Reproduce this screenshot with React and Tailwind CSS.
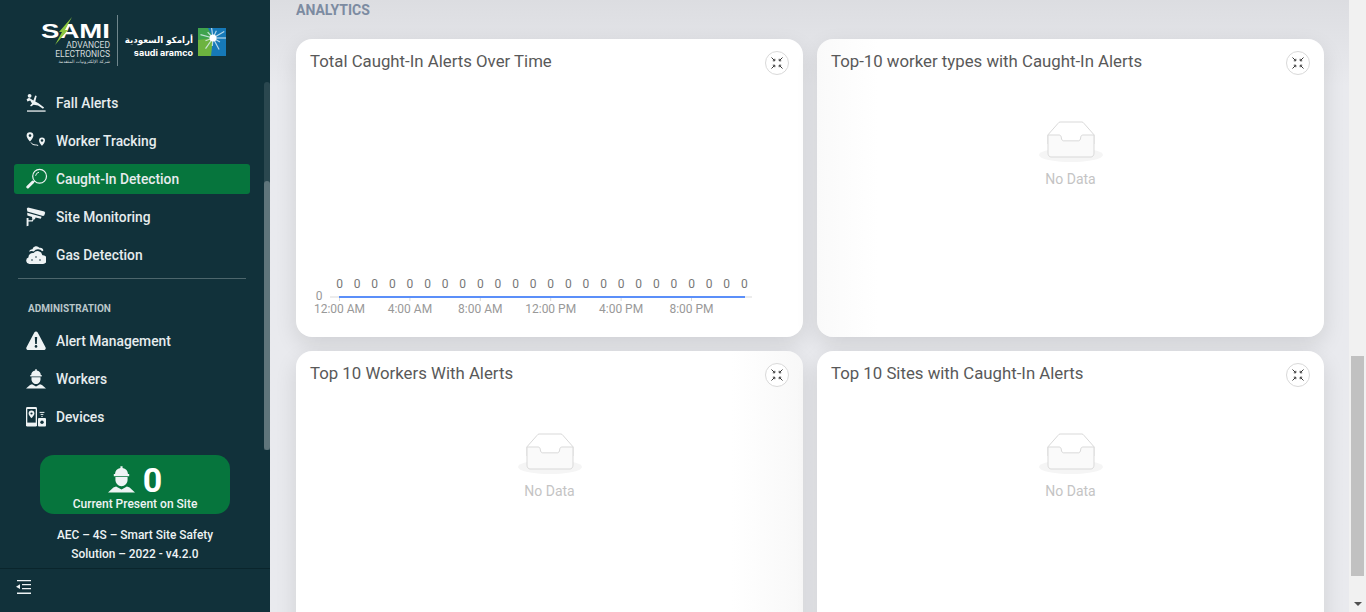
function FallIcon() {
  return (
    <svg width="20" height="20" viewBox="0 0 20 20" fill="#eef3f4">
      <circle cx="3.600" cy="2.800" r="1.900" />
      <path d="M.6 6.200 3 4.800l4.400 2.600 1.800-5 1.500.6-1.400 5.400 3.200 1.800 5.600 4.400-1.100 1.200-5-3.400-4.400-.6-2.600 1.800-.9-1L6 10.400 4.200 7.600 1.400 8.600z" />
      <path d="M1 17.400h18.600v1.300H1z" />
    </svg>
  );
}

function RouteIcon() {
  return (
    <svg width="20" height="20" viewBox="0 0 20 20" fill="none">
      <path d="M4 1.200a3.400 3.400 0 0 0-3.400 3.400C.6 7 4 10.600 4 10.600s3.400-3.600 3.400-6A3.400 3.400 0 0 0 4 1.200z" fill="#eef3f4" />
      <circle cx="4" cy="4.600" r="1.300" fill="#11313a" />
      <path d="M16 6.500a3 3 0 0 0-3 3c0 2.200 3 5.300 3 5.300s3-3.100 3-5.300a3 3 0 0 0-3-3z" fill="#eef3f4" />
      <circle cx="16" cy="9.500" r="1.200" fill="#11313a" />
      <path d="M5 11.500c1 1.800 2.600 2.400 4.200 2.400 1.200 0 2 .2 3 .6" stroke="#eef3f4" strokeWidth="1" />
    </svg>
  );
}

function SearchIcon() {
  return (
    <svg width="22" height="22" viewBox="0 0 22 22" fill="none" stroke="#eef3f4">
      <circle cx="13.600" cy="8.200" r="6.900" strokeWidth="1.200" />
      <path d="M8.600 13 7.400 14.200" strokeWidth="1.200" />
      <path d="M6.600 14.200 1.800 19" strokeWidth="3" strokeLinecap="round" />
      <path d="M9.600 7.800a4.200 4.200 0 0 1 3.400-3.600" strokeWidth="1" />
    </svg>
  );
}

function CameraIcon() {
  return (
    <svg width="20" height="20" viewBox="0 0 20 20" fill="#eef3f4">
      <path d="M2 0.400 18.400 4.600l.8 1.200-1 2.800-1.200.4L1.400 4.600.8 1.400z" />
      <path d="M1.200 5.800 15.600 9.800l-.8 2-5.200-1.200-.8 1.800-3-.8.400-1.600-4.800-1.400z" />
      <path d="M.6 11h1.900v2.200h3.400l1-2 1.200.5-1.400 2.900H2.500v4.200L.6 19.200z" />
    </svg>
  );
}

function CloudIcon() {
  return (
    <svg width="20" height="20" viewBox="0 0 20 20" fill="#eef3f4">
      <path d="M3 6.800a3.200 3.200 0 0 1 3.400-2.600A4 4 0 0 1 13.400 2.800a3.200 3.200 0 0 1 4 2.800l-1.200.6A5.200 5.200 0 0 0 7.800 6.400 5.400 5.400 0 0 0 3 6.800z" />
      <path d="M3.400 19a3.300 3.300 0 0 1-1-6.400A4.600 4.600 0 0 1 7.600 8a5 5 0 0 1 8.800 2.200 4.400 4.400 0 0 1 .6 8.800z" />
      <circle cx="6" cy="15" r=".8" fill="#11313a" />
      <circle cx="10" cy="12" r=".8" fill="#11313a" />
      <circle cx="14" cy="15" r=".8" fill="#11313a" />
    </svg>
  );
}

function AlertIcon() {
  return (
    <svg width="20" height="20" viewBox="0 0 20 20">
      <path d="M10 .6c.7 0 1.300.4 1.700 1l7.800 14.600c.7 1.300-.2 2.800-1.700 2.800H2.200C.7 19-.2 17.500.5 16.200L8.300 1.600c.4-.6 1-1 1.700-1z" fill="#eef3f4" />
      <path d="M8.800 6h2.400l-.4 7H9.200z" fill="#11313a" />
      <circle cx="10" cy="15.400" r="1.300" fill="#11313a" />
    </svg>
  );
}

function WorkerIcon({ size = 20 }) {
  return (
    <svg width={size} height={size} viewBox="0 0 20 20" fill="#eef3f4">
      <path d="M9.200.2h1.600v1.200c2.500.4 3.900 2.100 4 4.500h.9v1.600H4.300V5.900h.9c.1-2.400 1.500-4.100 4-4.500z" />
      <path d="M5.500 8.200h9v2c0 2.600-2 4.800-4.500 4.800s-4.500-2.200-4.500-4.800z" />
      <path d="M6 15.200 10 17.400l4-2.200 2 .8 4 3.600H0l4-3.600z" />
    </svg>
  );
}

function DevicesIcon() {
  return (
    <svg width="20" height="20" viewBox="0 0 20 20">
      <rect x="0" y="0" width="11" height="19.600" rx="1.400" fill="#eef3f4" />
      <rect x="1.300" y="2" width="8.400" height="13.600" fill="#11313a" />
      <path d="M5.500 3.600a2.900 2.900 0 0 1 2.900 2.900c0 2-2.900 4.700-2.900 4.700S2.600 8.500 2.600 6.500a2.900 2.900 0 0 1 2.900-2.900z" fill="#eef3f4" />
      <circle cx="5.500" cy="6.500" r="1.100" fill="#11313a" />
      <rect x="12" y="11" width="8" height="8.600" rx="1" fill="#eef3f4" />
      <circle cx="16" cy="15.300" r="1.700" fill="#11313a" />
      <path d="M13.600 5.400h4.800M14.600 7.400h2.800" stroke="#eef3f4" strokeWidth="1" />
      <circle cx="16" cy="9.400" r=".7" fill="#eef3f4" />
    </svg>
  );
}

function AramcoMark() {
  const rays = [0, 30, 62, 95, 125, 160, 195, 228, 262, 295, 330];
  return (
    <svg width="28" height="28" viewBox="0 0 28 28">
      <rect width="28" height="28" fill="#3fa34d" />
      <path d="M28 0v28H11L15 10 10 0z" fill="#1679b8" />
      <path d="M0 28h13L15 10 0 12z" fill="#6db33f" />
      {rays.map((r, i) => (
        <line key={r} x1="15" y1="10" x2={15 + (i % 2 ? 8 : 13) * Math.cos((r * Math.PI) / 180)} y2={10 + (i % 2 ? 8 : 13) * Math.sin((r * Math.PI) / 180)} stroke="#dff1f7" strokeWidth="1.200" opacity="0.8" />
      ))}
      <circle cx="15" cy="10" r="3.500" fill="#ffffff" />
    </svg>
  );
}

function Logo() {
  return (
    <div className="h-[84px] flex items-start pl-[41px] pt-[15px]">
      <div className="relative w-[69px] h-[50px] text-right text-white">
        <div className="h-[26px] pt-[7px] font-['Liberation_Sans',sans-serif] font-bold text-[20px] leading-[19px] scale-x-[1.38] origin-right">SAMI</div>
        <div className="text-[8.500px] leading-[9px] text-[#d3dcde]">ADVANCED</div>
        <div className="text-[8.500px] leading-[9px] text-[#d3dcde]">ELECTRONICS</div>
        <div className="text-[4.500px] leading-[6px] text-[#d3dcde] font-['DejaVu_Sans',sans-serif]" dir="rtl">شركة الإلكترونيات المتقدمة</div>
        <svg className="absolute left-[13px] top-[2px]" width="20" height="29" viewBox="0 0 20 29">
          <path d="M18 0 11 13h3L1 28 8 15H5z" fill="#8dc63f" />
        </svg>
      </div>
      <div className="w-px h-[51px] bg-[#6f868c] mx-[7px]" />
      <div className="mt-[19px] w-[68px] text-white text-right mr-[5px] shrink-0">
        <div className="text-[8.700px] leading-[12px] font-['DejaVu_Sans',sans-serif] font-bold whitespace-nowrap" dir="rtl">أرامكو السعودية</div>
        <div className="text-[9px] leading-[10px] mt-[2px] font-bold font-['Inter',sans-serif] whitespace-nowrap">saudi aramco</div>
      </div>
      <div className="mt-[13px] shrink-0">
        <AramcoMark />
      </div>
    </div>
  );
}

function NavItem({ icon, label, active }) {
  return (
    <div className="h-[38px] flex items-center">
      <div className={`w-[236px] h-[30px] ml-[14px] rounded-[3px] flex items-center pl-[12px] ${active ? 'bg-[#06753d]' : ''}`}>
        <span className="w-[30px] flex justify-start items-center">{icon}</span>
        <span className="text-[13.800px] font-medium text-[#e6ecee]">{label}</span>
      </div>
    </div>
  );
}

function Sidebar() {
  return (
    <aside className="relative w-[270px] h-full shrink-0 bg-[#11313a] flex flex-col">
      <Logo />
      <NavItem icon={<FallIcon />} label="Fall Alerts" />
      <NavItem icon={<RouteIcon />} label="Worker Tracking" />
      <NavItem icon={<SearchIcon />} label="Caught-In Detection" active />
      <NavItem icon={<CameraIcon />} label="Site Monitoring" />
      <NavItem icon={<CloudIcon />} label="Gas Detection" />
      <div className="h-px bg-[#4d666c] ml-[18px] w-[228px] mt-[4px]" />
      <div className="h-[43px] pl-[28px] pt-[24px] text-[10px] leading-[11px] font-bold text-[#b9c6c9]">ADMINISTRATION</div>
      <NavItem icon={<AlertIcon />} label="Alert Management" />
      <NavItem icon={<WorkerIcon />} label="Workers" />
      <NavItem icon={<DevicesIcon />} label="Devices" />
      <div className="mt-[19px] ml-[40px] w-[190px] h-[59px] rounded-[14px] bg-[#06753d] flex flex-col items-center text-white">
        <div className="flex items-center h-[39px] pt-[10px] gap-[8px]">
          <WorkerIcon size={27} />
          <span className="text-[34px] font-bold leading-none">0</span>
        </div>
        <div className="text-[12px] font-medium leading-[14px] mt-[3px] text-[#eef3f4]">Current Present on Site</div>
      </div>
      <div className="mt-[12px] text-center text-[11.900px] leading-[19px] font-medium text-[#eef3f4]">
        <div>AEC – 4S – Smart Site Safety</div>
        <div>Solution – 2022 - v4.2.0</div>
      </div>
      <div className="mt-[4px] border-t border-[#0a252c] flex-1 pl-[16px] pt-[11px]">
        <svg width="16" height="15" viewBox="0 0 16 15" fill="#eef3f4">
          <path d="M1 0h14v1.300H1zM6 4h9v1.300H6zM6 8h9v1.300H6zM1 12.600h14v1.300H1zM4 4.300v4.700L0 6.650z" />
        </svg>
      </div>
      <div className="absolute right-0 top-[82px] w-[6px] h-[368px] rounded-t-[3px] bg-[#2a474f]">
        <div className="mt-[99px] h-[269px] rounded-[3px] bg-[#5f757b]" />
      </div>
    </aside>
  );
}

function ExpandButton() {
  return (
    <button className="w-[24px] h-[24px] rounded-full border border-[#d9d9d9] bg-white flex items-center justify-center shrink-0 mt-[2px]">
      <svg width="14" height="14" viewBox="0 0 14 14" fill="none" stroke="#3a3a3a" strokeWidth="1">
        <path d="M1.500 1.500 4.500 4.500M2.800 4.800H4.800V2.800" />
        <path d="M12.500 1.500 9.500 4.500M9.200 2.800V4.800H11.200" />
        <path d="M1.500 12.500 4.500 9.500M2.800 9.200H4.800V11.200" />
        <path d="M12.500 12.500 9.500 9.500M9.200 11.200V9.200H11.200" />
      </svg>
    </button>
  );
}

function Empty() {
  return (
    <div className="flex flex-col items-center pt-[46px]">
      <svg width="64" height="41" viewBox="0 0 64 41">
        <g transform="translate(0 1)" fill="none" fillRule="evenodd">
          <ellipse fill="#f5f5f5" cx="32" cy="33" rx="32" ry="7" />
          <g fillRule="nonzero" stroke="#d9d9d9">
            <path d="M55 12.760L44.854 1.258C44.367.474 43.656 0 42.907 0H21.093c-.749 0-1.460.474-1.947 1.257L9 12.761V22h46v-9.240z" />
            <path d="M41.613 15.931c0-1.605.994-2.930 2.227-2.931H55v18.137C55 33.260 53.680 35 52.050 35h-40.100C10.320 35 9 33.259 9 31.137V13h11.160c1.233 0 2.227 1.323 2.227 2.928v.022c0 1.605 1.005 2.901 2.237 2.901h14.752c1.232 0 2.237-1.308 2.237-2.913v-.007z" fill="#fafafa" />
          </g>
        </g>
      </svg>
      <div className="text-[14px] leading-[22px] mt-[6px] text-[#c4c4c4]">No Data</div>
    </div>
  );
}

function TimeChart() {
  const points = Array.from({ length: 24 }, (_, i) => 43.5 + i * 17.6);
  const ticks = ['12:00 AM', '4:00 AM', '8:00 AM', '12:00 PM', '4:00 PM', '8:00 PM'];
  return (
    <svg className="block mt-[190px]" width="507" height="60" viewBox="0 0 507 60">
      {points.map((x, i) => (
        <text key={i} x={x} y="23" textAnchor="middle" fontSize="12" fill="#777777">0</text>
      ))}
      <text x="23" y="35" textAnchor="middle" fontSize="12" fill="#999999">0</text>
      <line x1="34" y1="32" x2="456" y2="32" stroke="#d9d9d9" />
      {ticks.map((t, i) => (
        <g key={t}>
          <line x1={43.5 + i * 70.4} y1="32" x2={43.5 + i * 70.4} y2="36" stroke="#d9d9d9" />
          <text x={43.5 + i * 70.4} y="48" textAnchor="middle" fontSize="12" fill="#999999">{t}</text>
        </g>
      ))}
      <line x1="43" y1="32" x2="449" y2="32" stroke="#5b8ff9" strokeWidth="2" />
    </svg>
  );
}

function Card({ title, children, tint }) {
  return (
    <div className={`h-[298px] rounded-[16px] shadow-[0_8px_22px_rgba(0,0,0,0.11)] ${tint}`}>
      <div className="flex items-start justify-between pt-[10px] pl-[14px] pr-[14px]">
        <h3 className="text-[16.800px] leading-[24px] text-[#595959]">{title}</h3>
        <ExpandButton />
      </div>
      {children}
    </div>
  );
}

export default function App() {
  return (
    <div className="w-[1366px] h-[612px] overflow-hidden flex font-['Roboto',sans-serif]">
      <Sidebar />
      <main className="flex-1 h-full overflow-hidden bg-gradient-to-b from-[#dcdde1] to-[#e9eaee] to-[14%] pl-[26px] pr-[25px]">
        <div className="h-[39px] pt-[2px] text-[14px] leading-[16px] font-bold text-[#7c8ba1]">ANALYTICS</div>
        <div className="grid grid-cols-2 gap-[14px]">
          <Card title="Total Caught-In Alerts Over Time" tint="bg-white"><TimeChart /></Card>
          <Card title="Top-10 worker types with Caught-In Alerts" tint="bg-gradient-to-r from-[#fafafa] to-white to-[12%]"><Empty /></Card>
          <Card title="Top 10 Workers With Alerts" tint="bg-gradient-to-l from-[#f8f8f8] to-white to-[14%]"><Empty /></Card>
          <Card title="Top 10 Sites with Caught-In Alerts" tint="bg-white"><Empty /></Card>
        </div>
      </main>
      <div className="relative w-[17px] h-full shrink-0 bg-[#f1f1f1] pt-[356px] pl-[2px]">
        <div className="w-[13px] h-[220px] bg-[#c1c1c1]" />
        <div className="absolute left-[5px] bottom-[6px] w-0 h-0 border-x-[4px] border-x-transparent border-t-[4px] border-t-[#505050]" />
      </div>
    </div>
  );
}
